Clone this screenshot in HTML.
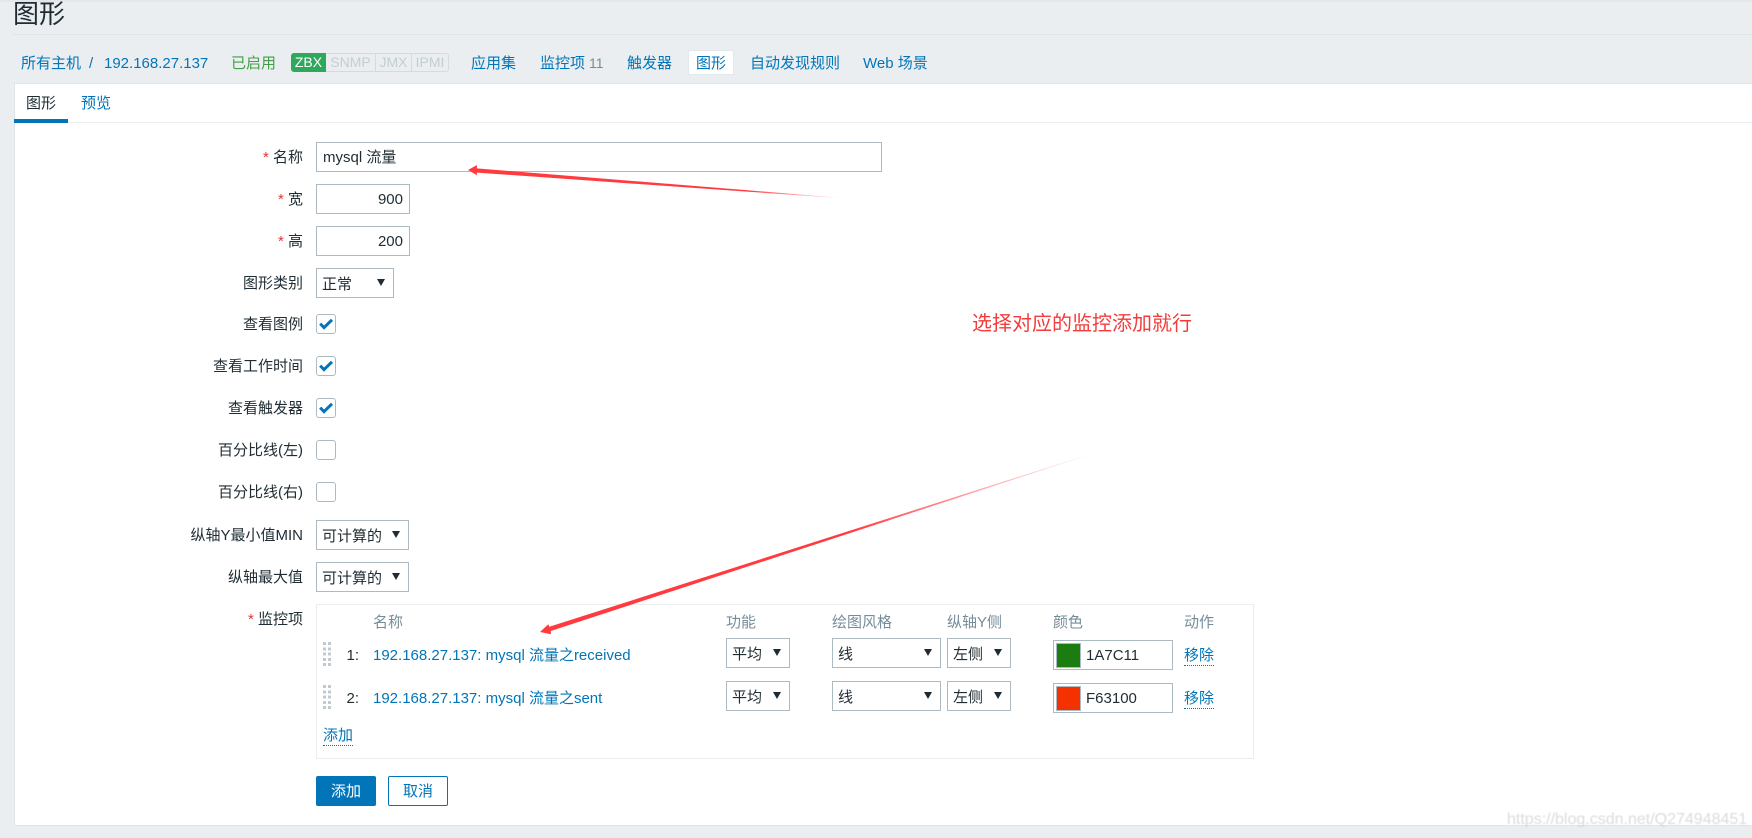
<!DOCTYPE html>
<html lang="zh-CN">
<head>
<meta charset="utf-8">
<title>图形</title>
<style>
html,body{margin:0;padding:0}
body{width:1752px;height:838px;position:relative;overflow:hidden;background:#ebeef0;font-family:"Liberation Sans","Noto Sans CJK SC",sans-serif;font-size:15px;color:#1f2c33}
.a{position:absolute;white-space:nowrap}
.l{color:#0275b8}
.nav{top:51px;height:25px;line-height:25px}
.lab{right:1449px;height:30px;line-height:32px;text-align:right;color:#1f2c33}
.lab i{font-style:normal;color:#e33734}
.in{position:absolute;box-sizing:border-box;border:1px solid #acbbc2;background:#fff;height:30px;line-height:30px;padding:0 6px;white-space:nowrap}
.sel{line-height:32px;padding-left:5px}
.sel:after{content:"";position:absolute;right:8px;top:10px;border-left:4px solid transparent;border-right:4px solid transparent;border-top:7px solid #1f2c33}
.cb{position:absolute;left:316px;width:20px;height:20px;box-sizing:border-box;border:1px solid #acbbc2;border-radius:3px;background:#fff}
.cb svg{position:absolute;left:-1px;top:-1px}
.th{top:613px;height:20px;line-height:20px;color:#768d99}
.dot{border-bottom:1px dotted #0275b8;height:19px;line-height:19px;color:#0275b8}
.badge{position:absolute;top:53px;height:19px;line-height:19px;box-sizing:border-box;text-align:center;font-size:14px}
.g{border:1px solid #d3dbdf;border-left:0;color:#c3ced3;line-height:17px}
.drag{position:absolute;left:323px;width:8px;height:24px;background:repeating-linear-gradient(to bottom,#bfcbd1 0 3px,transparent 3px 5.3px);-webkit-mask:repeating-linear-gradient(to right,#000 0 3px,transparent 3px 5px);mask:repeating-linear-gradient(to right,#000 0 3px,transparent 3px 5px)}
</style>
</head>
<body>
<div class="a" style="left:0;top:0;width:1752px;height:2px;background:#e4e6e8"></div>
<div class="a" style="left:13px;top:-1px;font-size:26px;line-height:30px;color:#1f2c33">图形</div>
<div class="a" style="left:13px;top:34px;width:1739px;height:1px;background:#dfe4e7"></div>

<div class="a nav l" style="left:21px">所有主机</div>
<div class="a nav l" style="left:89px">/</div>
<div class="a nav l" style="left:104px">192.168.27.137</div>
<div class="a nav" style="left:231px;color:#429e47">已启用</div>
<div class="badge" style="left:291px;width:35px;background:#2fa85e;color:#fff;border-radius:3px 0 0 3px">ZBX</div>
<div class="badge g" style="left:326px;width:50px">SNMP</div>
<div class="badge g" style="left:376px;width:36px">JMX</div>
<div class="badge g" style="left:412px;width:37px;border-radius:0 3px 3px 0">IPMI</div>
<div class="a nav l" style="left:471px">应用集</div>
<div class="a nav l" style="left:540px">监控项</div>
<div class="a nav" style="left:589px;color:#768d99;font-size:14px">11</div>
<div class="a nav l" style="left:627px">触发器</div>
<div class="a" style="left:688px;top:50px;width:46px;height:25px;box-sizing:border-box;background:#fff;border:1px solid #e4e8ea;border-radius:2px"></div>
<div class="a nav l" style="left:696px">图形</div>
<div class="a nav l" style="left:750px">自动发现规则</div>
<div class="a nav l" style="left:863px">Web 场景</div>

<div class="a" style="left:14px;top:83px;width:1738px;height:743px;box-sizing:border-box;background:#fff;border-top:1px solid #dfe4e7;border-left:1px solid #dfe4e7;border-bottom:1px solid #dfe4e7"></div>
<div class="a" style="left:14px;top:122px;width:1738px;height:1px;background:#ebeef0"></div>
<div class="a" style="left:14px;top:119px;width:54px;height:4px;background:#0275b8"></div>
<div class="a" style="left:26px;top:94px;line-height:20px">图形</div>
<div class="a l" style="left:81px;top:94px;line-height:20px">预览</div>

<div class="a lab" style="top:142px"><i>*</i> 名称</div>
<div class="in" style="left:316px;top:142px;width:566px">mysql 流量</div>
<div class="a lab" style="top:184px"><i>*</i> 宽</div>
<div class="in" style="left:316px;top:184px;width:94px;text-align:right">900</div>
<div class="a lab" style="top:226px"><i>*</i> 高</div>
<div class="in" style="left:316px;top:226px;width:94px;text-align:right">200</div>
<div class="a lab" style="top:268px">图形类别</div>
<div class="in sel" style="left:316px;top:268px;width:78px">正常</div>

<div class="a lab" style="top:309px">查看图例</div>
<div class="cb" style="top:314px"><svg width="20" height="20"><path d="M4.2 9.6 8 13.6 16 5.8" fill="none" stroke="#0275b8" stroke-width="3"/></svg></div>
<div class="a lab" style="top:351px">查看工作时间</div>
<div class="cb" style="top:356px"><svg width="20" height="20"><path d="M4.2 9.6 8 13.6 16 5.8" fill="none" stroke="#0275b8" stroke-width="3"/></svg></div>
<div class="a lab" style="top:393px">查看触发器</div>
<div class="cb" style="top:398px"><svg width="20" height="20"><path d="M4.2 9.6 8 13.6 16 5.8" fill="none" stroke="#0275b8" stroke-width="3"/></svg></div>
<div class="a lab" style="top:435px">百分比线(左)</div>
<div class="cb" style="top:440px"></div>
<div class="a lab" style="top:477px">百分比线(右)</div>
<div class="cb" style="top:482px"></div>
<div class="a lab" style="top:520px">纵轴Y最小值MIN</div>
<div class="in sel" style="left:316px;top:520px;width:93px">可计算的</div>
<div class="a lab" style="top:562px">纵轴最大值</div>
<div class="in sel" style="left:316px;top:562px;width:93px">可计算的</div>

<div class="a lab" style="top:604px"><i>*</i> 监控项</div>
<div class="a" style="left:316px;top:604px;width:938px;height:155px;box-sizing:border-box;border:1px solid #ebeef0"></div>
<div class="a th" style="left:373px">名称</div>
<div class="a th" style="left:726px">功能</div>
<div class="a th" style="left:832px">绘图风格</div>
<div class="a th" style="left:947px">纵轴Y侧</div>
<div class="a th" style="left:1053px">颜色</div>
<div class="a th" style="left:1184px">动作</div>

<div class="drag" style="top:642px"></div>
<div class="a" style="right:1393px;top:646px;line-height:20px">1:</div>
<div class="a l" style="left:373px;top:646px;line-height:20px">192.168.27.137: mysql 流量之received</div>
<div class="in sel" style="left:726px;top:638px;width:64px">平均</div>
<div class="in sel" style="left:832px;top:638px;width:109px">线</div>
<div class="in sel" style="left:947px;top:638px;width:64px">左侧</div>
<div class="in" style="left:1053px;top:640px;width:120px;padding-left:32px">1A7C11</div>
<div class="a" style="left:1056px;top:643px;width:25px;height:25px;box-sizing:border-box;border:1px solid #acbbc2;background:#1a7c11"></div>
<div class="a dot" style="left:1184px;top:646px">移除</div>

<div class="drag" style="top:685px"></div>
<div class="a" style="right:1393px;top:689px;line-height:20px">2:</div>
<div class="a l" style="left:373px;top:689px;line-height:20px">192.168.27.137: mysql 流量之sent</div>
<div class="in sel" style="left:726px;top:681px;width:64px">平均</div>
<div class="in sel" style="left:832px;top:681px;width:109px">线</div>
<div class="in sel" style="left:947px;top:681px;width:64px">左侧</div>
<div class="in" style="left:1053px;top:683px;width:120px;padding-left:32px">F63100</div>
<div class="a" style="left:1056px;top:686px;width:25px;height:25px;box-sizing:border-box;border:1px solid #acbbc2;background:#f63100"></div>
<div class="a dot" style="left:1184px;top:689px">移除</div>

<div class="a dot" style="left:323px;top:726px">添加</div>

<div class="a" style="left:316px;top:776px;width:60px;height:30px;line-height:32px;text-align:center;background:#0275b8;color:#fff;border-radius:2px">添加</div>
<div class="a" style="left:388px;top:776px;width:60px;height:30px;line-height:30px;text-align:center;box-sizing:border-box;background:#fff;color:#0275b8;border:1px solid #0275b8;border-radius:2px">取消</div>

<div class="a" style="left:972px;top:310px;font-size:20px;line-height:28px;color:#f23c3c">选择对应的监控添加就行</div>

<svg class="a" style="left:0;top:0" width="1752" height="838">
<defs>
<linearGradient id="g1" gradientUnits="userSpaceOnUse" x1="468" y1="170" x2="840" y2="198">
<stop offset="0" stop-color="#ff3b3f"/><stop offset=".75" stop-color="#ff3b3f"/><stop offset="1" stop-color="#ff3b3f" stop-opacity="0"/>
</linearGradient>
<linearGradient id="g2" gradientUnits="userSpaceOnUse" x1="540" y1="632" x2="1097" y2="452">
<stop offset="0" stop-color="#ff3b3f"/><stop offset=".55" stop-color="#ff3b3f"/><stop offset="1" stop-color="#ff3b3f" stop-opacity="0"/>
</linearGradient>
</defs>
<polygon points="468,170 477,165 476.8,168.4 840,197.7 840,198.2 476.8,172.6 477,175.2" fill="url(#g1)"/>
<polygon points="540,632 548.3,624.3 549.3,626.8 1097,451.7 1097,452.2 550.7,631 551,634.2" fill="url(#g2)"/>
</svg>

<div class="a" style="left:1507px;top:810px;font-size:16px;line-height:20px;color:#d0d0d0;opacity:.75;filter:blur(.4px)">https://blog.csdn.net/Q274948451</div>
</body>
</html>
